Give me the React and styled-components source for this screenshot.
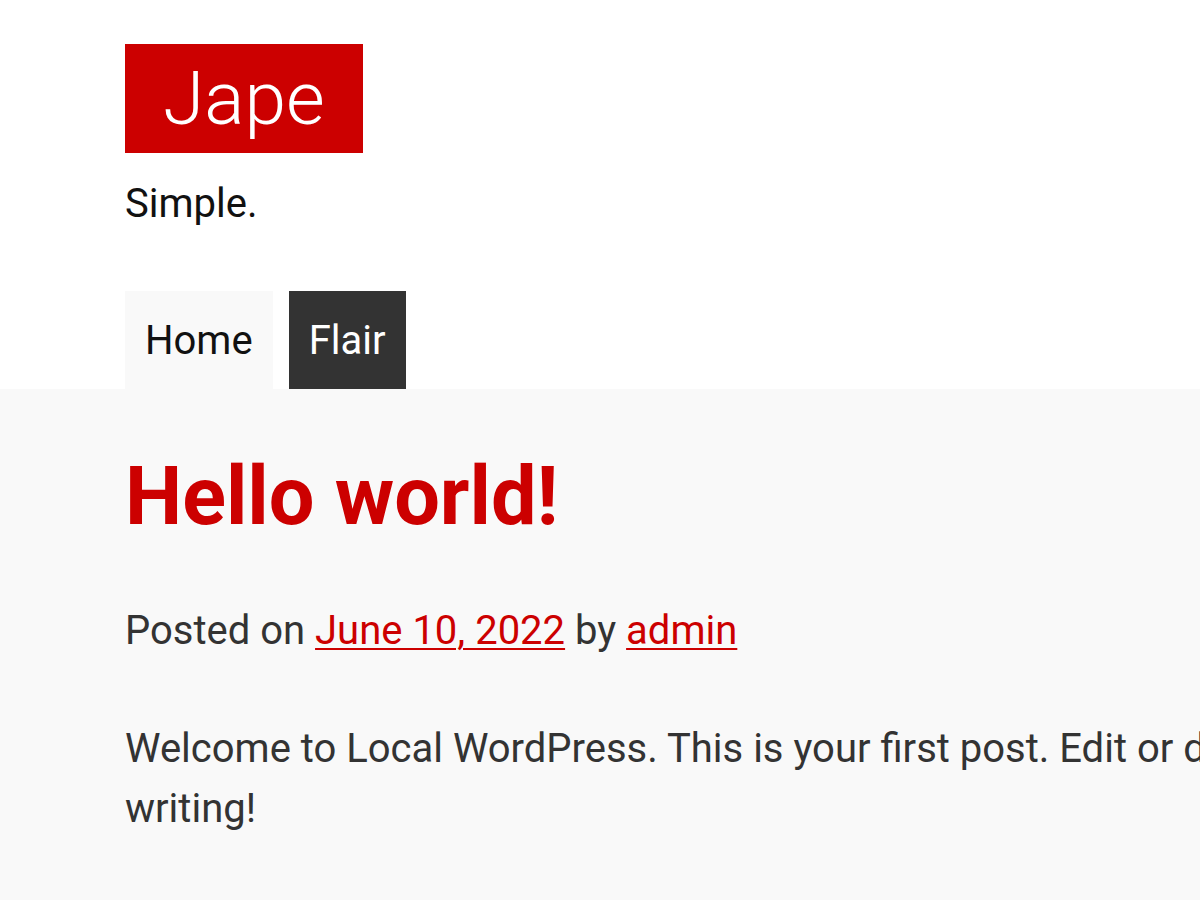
import React from "react";
import styled, { createGlobalStyle } from "styled-components";

const GlobalStyle = createGlobalStyle`
  html, body {
    margin: 0;
    padding: 0;
    background: #fff;
    overflow: hidden;
  }
  body {
    font-family: Roboto, "Noto Sans", "Liberation Sans", sans-serif;
    color: #333;
  }
`;

const Page = styled.div`
  width: 1200px;
  height: 900px;
  overflow: hidden;
  display: flex;
  flex-direction: column;
`;

const Header = styled.header`
  background: #fff;
  padding: 44px 0 0 125px;
`;

const Logo = styled.a`
  display: inline-block;
  background: #cc0000;
  color: #fff;
  font-size: 75px;
  font-weight: 300;
  line-height: 109px;
  padding: 0 38px;
  text-decoration: none;
`;

const Tagline = styled.p`
  margin: 24px 0 0;
  font-size: 40px;
  line-height: 54px;
  color: #111;
`;

const Nav = styled.nav`
  display: flex;
  gap: 16px;
  margin-top: 60px;
`;

const NavItem = styled.a`
  display: block;
  height: 98px;
  line-height: 100px;
  padding: 0 20px;
  font-size: 40px;
  text-decoration: none;
  background: ${(p) => (p.$dark ? "#333" : "#f9f9f9")};
  color: ${(p) => (p.$dark ? "#fff" : "#111")};
`;

const Main = styled.main`
  flex: 1;
  background: #f9f9f9;
  padding: 60px 0 0 125px;
`;

const Article = styled.article`
  width: 1470px;
`;

const Title = styled.h1`
  margin: 0;
  font-size: 81px;
  line-height: 96px;
  font-weight: 700;
  color: #cc0000;
`;

const Meta = styled.p`
  margin: 56px 0 0;
  font-size: 40px;
  line-height: 60px;
  color: #333;
`;

const Link = styled.a`
  color: #cc0000;
  text-decoration: underline;
  text-underline-offset: 4px;
  text-decoration-thickness: 2px;
`;

const Body = styled.p`
  margin: 58px 0 0;
  font-size: 40px;
  line-height: 60px;
  color: #333;
`;

export default function App() {
  return (
    <Page>
      <GlobalStyle />
      <Header>
        <Logo href="#">Jape</Logo>
        <Tagline>Simple.</Tagline>
        <Nav>
          <NavItem href="#">Home</NavItem>
          <NavItem href="#" $dark>
            Flair
          </NavItem>
        </Nav>
      </Header>
      <Main>
        <Article>
          <Title>Hello world!</Title>
          <Meta>
            Posted on <Link href="#">June 10, 2022</Link> by{" "}
            <Link href="#">admin</Link>
          </Meta>
          <Body>
            Welcome to Local WordPress. This is your first post. Edit or delete
            it, then start writing!
          </Body>
        </Article>
      </Main>
    </Page>
  );
}
